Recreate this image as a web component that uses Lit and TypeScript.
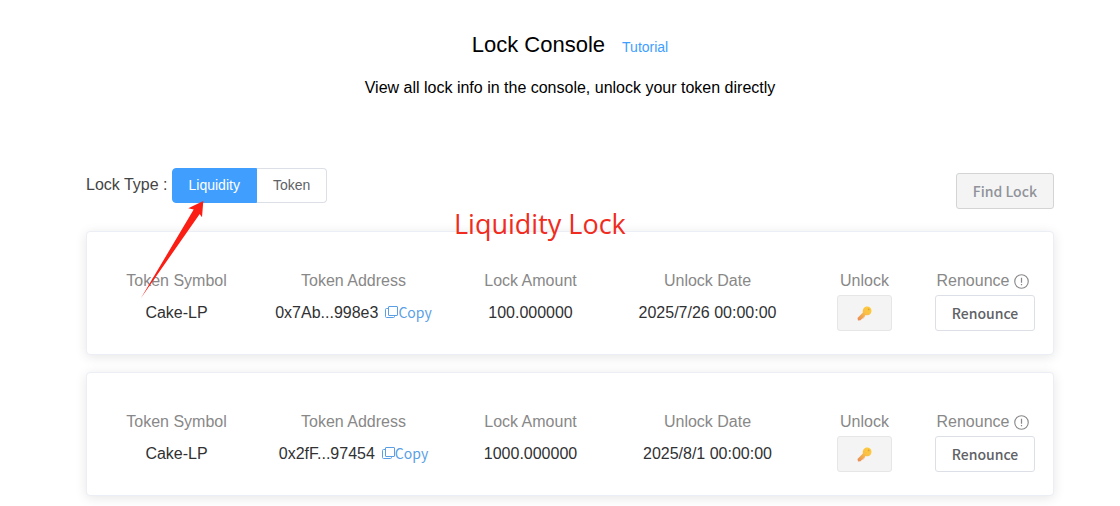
import { LitElement, html, css, svg } from "lit";
import { customElement, property, state } from "lit/decorators.js";

interface Lock {
  symbol: string;
  address: string;
  amount: string;
  date: string;
}

const keyIcon = svg`
  <defs>
    <linearGradient id="key" x1="1" y1="0" x2="0" y2="1">
      <stop offset="0" stop-color="#ffcf3a" />
      <stop offset="0.45" stop-color="#f9c046" />
      <stop offset="1" stop-color="#e8875a" />
    </linearGradient>
  </defs>
  <path d="M9.6 0.6C12 0.2 14.3 2 14.5 4.4C14.6 7 12.7 9.2 10.2 9.2C9.7 9.2 9.2 9.1 8.7 9L7.7 10V11.2H6.5V12.4H5.2L3.6 14.3L1 14.4L0.5 12L5.9 6.4C5.3 3.8 7 1 9.6 0.6Z" fill="url(#key)" />
  <circle cx="11.7" cy="3.4" r="0.9" fill="#dda23a" />`;

@customElement("lock-card")
export class LockCard extends LitElement {
  @property({ attribute: false }) lock!: Lock;

  static styles = css`
    :host {
      display: block;
      background: #fff;
      border: 1px solid #ebeef5;
      border-radius: 4px;
      box-shadow: 0 2px 12px rgba(0, 0, 0, 0.1);
      padding: 38px 16px 23px 1px;
    }
    .columns {
      display: grid;
      grid-template-columns: 177fr 177fr 177fr 177fr 137fr 104fr;
      margin: 0;
    }
    .cell {
      display: flex;
      flex-direction: column;
      align-items: center;
      gap: 3px;
      white-space: nowrap;
    }
    .name {
      display: flex;
      align-items: center;
      gap: 5px;
      line-height: 22px;
      color: #888;
    }
    .value {
      display: flex;
      align-items: center;
      gap: 7px;
      min-height: 36px;
      margin: 0;
      color: #303133;
    }
    .info {
      width: 15px;
      height: 15px;
      margin-right: 4px;
    }
    .copy {
      display: flex;
      align-items: center;
      padding: 0 0 2px;
      border: 0;
      background: none;
      color: #5a9fe6;
      font: 14px/20px "Noto Sans CJK SC", sans-serif;
    }
    .copy svg {
      width: 13px;
      height: 14px;
    }
    .button {
      display: flex;
      align-items: center;
      justify-content: center;
      height: 36px;
      padding: 0 16px;
      border: 1px solid #dcdfe6;
      border-radius: 3px;
      background: #fff;
      color: #606266;
      font: 500 14px/20px "Noto Sans CJK SC", sans-serif;
    }
    .key {
      padding: 0 19px;
      border-color: #e6e6e6;
      background: #f4f4f4;
    }
    .key svg {
      width: 15px;
      height: 15px;
    }
  `;

  render() {
    const { symbol, address, amount, date } = this.lock;
    return html`
      <dl class="columns">
        <div class="cell"><dt class="name">Token Symbol</dt><dd class="value">${symbol}</dd></div>
        <div class="cell">
          <dt class="name">Token Address</dt>
          <dd class="value">
            <span>${address}</span>
            <button class="copy">
              <svg viewBox="0 0 13 14" fill="none" stroke="currentColor" aria-hidden="true">
                <rect x="3.5" y="1.5" width="9" height="9" rx="0.5" />
                <path d="M3 3.5H1.5Q0.5 3.5 0.5 4.5V11.5Q0.5 12.5 1.5 12.5H8.5Q9.5 12.5 9.5 11.5V11" />
              </svg>Copy</button>
          </dd>
        </div>
        <div class="cell"><dt class="name">Lock Amount</dt><dd class="value">${amount}</dd></div>
        <div class="cell"><dt class="name">Unlock Date</dt><dd class="value">${date}</dd></div>
        <div class="cell">
          <dt class="name">Unlock</dt>
          <dd class="value">
            <button class="button key" aria-label="Unlock" disabled>
              <svg viewBox="0 0 15 15" aria-hidden="true">${keyIcon}</svg>
            </button>
          </dd>
        </div>
        <div class="cell">
          <dt class="name">
            Renounce
            <svg class="info" viewBox="0 0 16 16" fill="none" stroke="currentColor" aria-hidden="true">
              <circle cx="8" cy="8" r="7.2" stroke-width="1.2" />
              <path d="M8 4V9.3M8 10.7V12" stroke-width="1.3" />
            </svg>
          </dt>
          <dd class="value"><button class="button">Renounce</button></dd>
        </div>
      </dl>
    `;
  }
}

@customElement("app-root")
export class AppRoot extends LitElement {
  @state() private type = "Liquidity";

  private locks: Lock[] = [
    { symbol: "Cake-LP", address: "0x7Ab...998e3", amount: "100.000000", date: "2025/7/26 00:00:00" },
    { symbol: "Cake-LP", address: "0x2fF...97454", amount: "1000.000000", date: "2025/8/1 00:00:00" },
  ];

  static styles = css`
    :host {
      display: block;
      position: relative;
      box-sizing: border-box;
      padding: 30px 66px 11px 86px;
      background: #fff;
      color: #000;
      font: 16px/24px "Liberation Sans", Arial, sans-serif;
    }
    .heading {
      display: flex;
      align-items: baseline;
      justify-content: center;
      gap: 17px;
    }
    .title {
      margin: 0;
      font-size: 22px;
      font-weight: 400;
      line-height: 30px;
    }
    .tutorial {
      color: #409eff;
      font-size: 14px;
      text-decoration: none;
    }
    .intro {
      margin: 16px 0 68px;
      text-align: center;
    }
    .toolbar {
      display: flex;
      align-items: flex-start;
      justify-content: space-between;
      margin-bottom: 22px;
    }
    .types {
      display: flex;
      align-items: flex-start;
      gap: 4px;
      color: #444;
      line-height: 33px;
    }
    .group {
      display: flex;
    }
    .option {
      display: block;
      position: relative;
      padding: 0 16px;
      border: 1px solid #dcdfe6;
      border-left-width: 0;
      color: #606266;
      font-size: 14px;
    }
    .option:first-child {
      border-left-width: 1px;
      border-radius: 4px 0 0 4px;
    }
    .option:last-child {
      border-radius: 0 4px 4px 0;
    }
    .option.selected {
      border-color: #409eff;
      background: #409eff;
      color: #fff;
    }
    .radio {
      position: absolute;
      inset: 0;
      margin: 0;
      opacity: 0;
    }
    .find {
      height: 36px;
      margin-top: 5px;
      padding: 0 16px;
      border: 1px solid #d3d4d6;
      border-radius: 3px;
      background: #f4f4f5;
      color: #909399;
      font: 500 14px/20px "Noto Sans CJK SC", sans-serif;
    }
    .cards {
      display: grid;
      gap: 17px;
    }
    .note {
      position: absolute;
      top: 206px;
      left: 454px;
      color: #f02b20;
      font: 27px/36px "Open Sans", sans-serif;
    }
    .arrow {
      position: absolute;
      top: 200px;
      left: 140px;
      width: 66px;
      height: 100px;
      pointer-events: none;
    }
  `;

  render() {
    return html`
      <header class="heading">
        <h1 class="title">Lock Console</h1>
        <a class="tutorial" href="#tutorial">Tutorial</a>
      </header>
      <p class="intro">View all lock info in the console, unlock your token directly</p>
      <div class="toolbar">
        <div class="types" role="radiogroup" aria-labelledby="type-label">
          <span id="type-label">Lock Type :</span>
          <div class="group">
            ${["Liquidity", "Token"].map(
              (name) => html`
                <label class="option ${this.type === name ? "selected" : ""}">
                  <input class="radio" type="radio" name="type" .checked=${this.type === name}
                    @change=${() => (this.type = name)} />${name}</label>
              `,
            )}
          </div>
        </div>
        <button class="find" disabled>Find Lock</button>
      </div>
      <main class="cards">
        ${this.locks.map((lock) => html`<lock-card .lock=${lock}></lock-card>`)}
      </main>
      <span class="note">Liquidity Lock</span>
      <svg class="arrow" viewBox="0 0 66 100" aria-hidden="true">
        <path d="M63.3 1L48.3 8.3L53.7 9.5L1 98L59.7 14L62 17.3Z" fill="#fa1e14" />
      </svg>
    `;
  }
}
